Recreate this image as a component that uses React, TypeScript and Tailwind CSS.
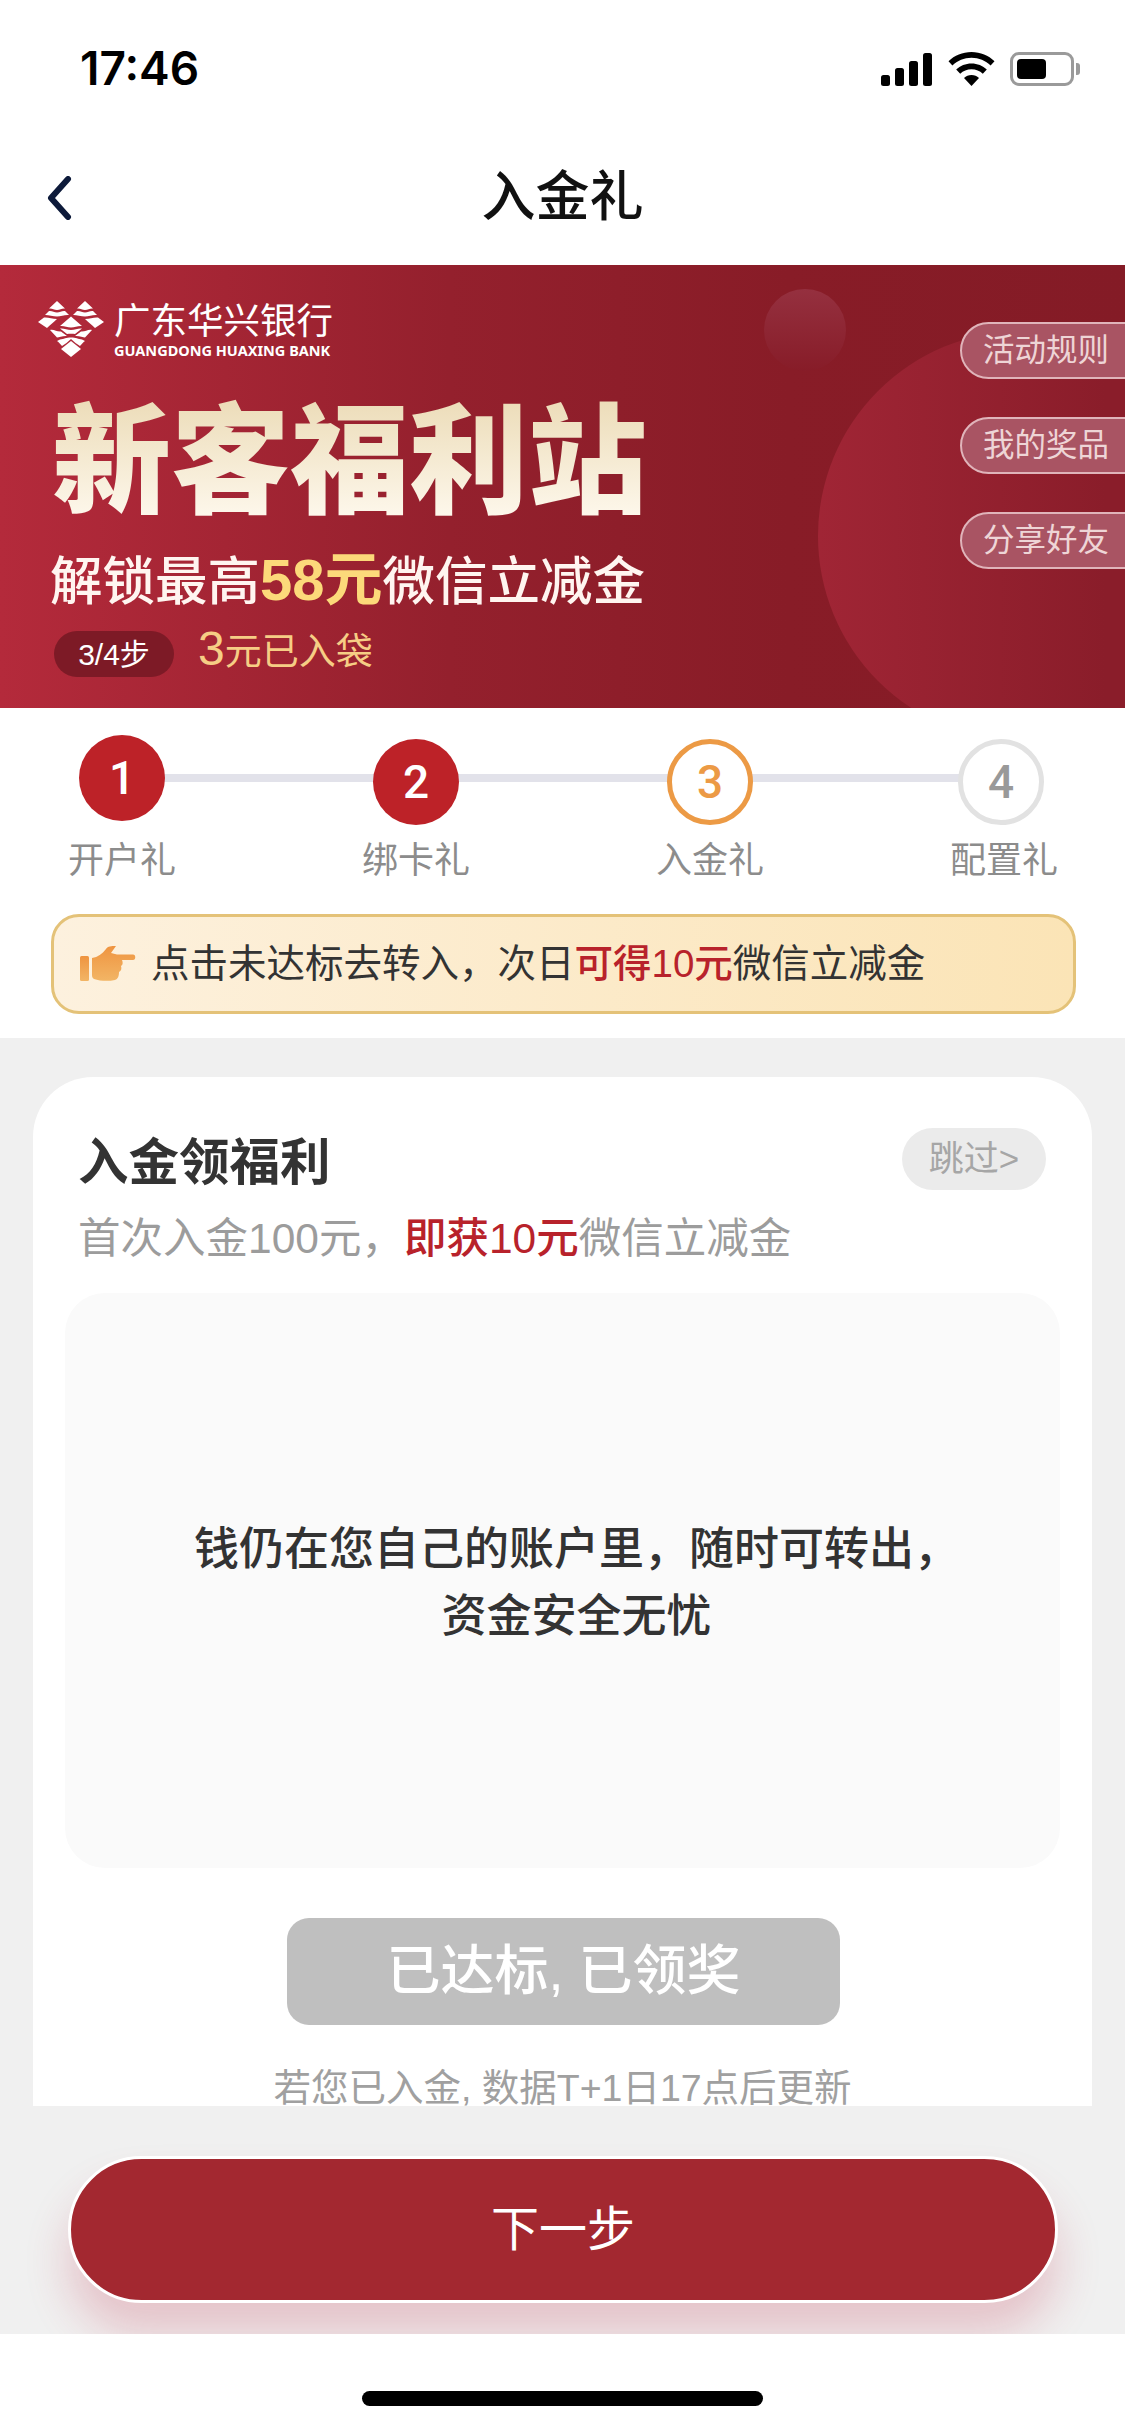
const Signal = () => (
  <svg width="52" height="33" viewBox="0 0 52 33" fill="#000">
    <rect x="0" y="22" width="9" height="11" rx="2.5" />
    <rect x="14" y="15" width="9" height="18" rx="2.5" />
    <rect x="28" y="8" width="9" height="25" rx="2.5" />
    <rect x="42" y="0" width="9" height="33" rx="2.5" />
  </svg>
);

const Wifi = () => (
  <svg width="47" height="34" viewBox="0 0 47 34" fill="#000">
    <path d="M23.5 0C14.5 0 6.5 3.5 0.5 9.2L4.4 13.4C9.4 8.7 16.1 5.8 23.5 5.8S37.6 8.7 42.6 13.4L46.5 9.2C40.5 3.5 32.5 0 23.5 0Z" />
    <path d="M23.5 11.5C17.6 11.5 12.2 13.8 8.2 17.6L12.2 21.8C15.2 19 19.1 17.3 23.5 17.3S31.8 19 34.8 21.8L38.8 17.6C34.8 13.8 29.4 11.5 23.5 11.5Z" />
    <path d="M23.5 23C20.6 23 18 24.1 16 26L23.5 34L31 26C29 24.1 26.4 23 23.5 23Z" />
  </svg>
);

const Battery = () => (
  <div className="flex items-center">
    <div className="w-[64px] h-[34px] rounded-[9px] border-[3px] border-[#9a9a9a] p-[4px] flex">
      <div className="w-[29px] h-full rounded-[4px] bg-black" />
    </div>
    <div className="w-[4px] h-[12px] ml-[2px] rounded-r-[3px] bg-[#9a9a9a]" />
  </div>
);

const BankLogo = () => (
  <svg width="66" height="56" viewBox="0 0 66 56" fill="#fff">
    <path d="M19 0L27 7.5C24 7 22 9 19 9S14 7 11 7.5Z" />
    <path d="M47 0L55 7.5C52 7 50 9 47 9S42 7 39 7.5Z" />
    <path d="M11 10C14 9.5 16 11.5 19 11.5S24 9.5 27 10L31 14C27 13.5 23 15.5 19 15.5S9 13.5 7 14Z" />
    <path d="M39 10C42 9.5 44 11.5 47 11.5S52 9.5 55 10L59 14C55 13.5 51 15.5 47 15.5S37 13.5 35 14Z" />
    <path d="M0 21L6 16.5C10 16 14 18 19 18C16 21 12 24 9 27Z" />
    <path d="M66 21L60 16.5C56 16 52 18 47 18C50 21 54 24 57 27Z" />
    <path d="M33 15.5L44 25C40 24.5 37 26.5 33 26.5S26 24.5 22 25Z" />
    <path d="M12 29C16 28 19 31 23 30.5L29 35C25 34.5 21 36.5 19 36.5Z" />
    <path d="M54 29C50 28 47 31 43 30.5L37 35C41 34.5 45 36.5 47 36.5Z" />
    <path d="M22 27.5C26 27 29 29 33 29S40 27 44 27.5L37 33C35 32.5 31 32.5 29 33Z" />
    <path d="M33 40L43 48L33 56L23 48Z" />
    <path d="M22 38.5C26 38 28 36.5 33 36.5S40 38 44 38.5L47 40C45 41 44 43 42 45C39 43 36 41 33 38C30 41 27 43 24 45C22 43 21 41 19 40Z" />
  </svg>
);

const Hand = () => (
  <svg width="56" height="36" viewBox="0 0 56 36">
    <defs>
      <linearGradient id="hand" x1="0" y1="0" x2="0" y2="1">
        <stop offset="0" stopColor="#ef9440" />
        <stop offset="1" stopColor="#f2b565" />
      </linearGradient>
    </defs>
    <rect x="0" y="10" width="9" height="25" rx="1.5" fill="url(#hand)" />
    <path d="M12 12C18 11 22 8 26 3C28 0 31 0 36 0L31 7L37 8.5H53C56 8.5 56 14 53 14H42C43 16 43 19 41 20C42 23 41 25 39 26C39 30 38 33 35 34C28 35.5 20 35 14 33C12 32 12 30 12 28Z" fill="url(#hand)" />
  </svg>
);

const Pill = ({ label }: { label: string }) => (
  <div className="w-[175px] h-[57px] rounded-l-[29px] border-2 border-[#e0b4ba] bg-[#a95463] flex items-center pl-[21px] text-[31.5px] text-[#eed5d6] leading-none whitespace-nowrap">
    {label}
  </div>
);

const steps = [
  { n: "1", label: "开户礼", circle: "bg-[#bd2228] text-white" },
  { n: "2", label: "绑卡礼", circle: "bg-[#bd2228] text-white mt-[4px]" },
  { n: "3", label: "入金礼", circle: "bg-white border-[5px] border-[#ec9a45] text-[#ec9a45] mt-[4px]" },
  { n: "4", label: "配置礼", circle: "bg-white border-[5px] border-[#e2e2e2] text-[#999999] mt-[4px] -translate-x-[3px]" },
];

export default function App() {
  return (
    <div className="w-[1125px] h-[2436px] bg-white flex flex-col overflow-hidden [font-family:'Liberation_Sans','Noto_Sans_CJK_SC',sans-serif]">
      <div className="h-[136px] flex items-start justify-between pl-[80px] pr-[45px] pt-[44px]">
        <span className="text-[46px] leading-[48px] font-semibold text-black [font-family:Inter,sans-serif]">17:46</span>
        <div className="flex items-center gap-[15px] mt-[8px]">
          <Signal />
          <Wifi />
          <Battery />
        </div>
      </div>

      <div className="relative h-[129px] flex items-center justify-center pb-[7px]">
        <svg className="absolute left-[46px] top-[40px]" width="26" height="44" viewBox="0 0 26 44" fill="none">
          <path d="M22 3L5 22L22 41" stroke="#0d1a3a" strokeWidth="6" strokeLinecap="round" strokeLinejoin="round" />
        </svg>
        <span className="text-[54px] leading-[64px] font-medium text-[#111111]">入金礼</span>
      </div>

      <div className="relative h-[443px] overflow-hidden bg-[linear-gradient(90deg,#b42a3b_0%,#94202d_40%,#881c27_70%,#841b26_100%)] pl-[38px] pt-[34px]">
        <div className="absolute left-[818px] top-[66px] w-[410px] h-[410px] rounded-full bg-[linear-gradient(90deg,#a02535,#8a1d2a_70%)]" />
        <div className="absolute left-[764px] top-[24px] w-[82px] h-[82px] rounded-full bg-[linear-gradient(180deg,#95303f,#871c28)]" />

        <div className="relative flex items-center gap-[10px]">
          <BankLogo />
          <div className="flex flex-col text-white mt-[3px]">
            <span className="text-[36.5px] leading-[40px] whitespace-nowrap">广东华兴银行</span>
            <span className="text-[14.5px] leading-[16px] font-bold whitespace-nowrap [font-family:'Noto_Sans',sans-serif]">GUANGDONG HUAXING BANK</span>
          </div>
        </div>

        <div className="relative mt-[40px] ml-[14px] w-fit text-[119px] leading-[130px] font-black whitespace-nowrap text-transparent bg-clip-text bg-[linear-gradient(180deg,#ecdcb8,#fffaf0)]">
          新客福利站
        </div>

        <div className="relative mt-[20px] ml-[12px] text-[52.5px] leading-[64px] font-medium text-[#fff5f0] whitespace-nowrap">
          解锁最高<span className="font-bold text-[#fcd97a] text-[58px]">58元</span>微信立减金
        </div>

        <div className="relative mt-[10px] ml-[16px] flex items-center">
          <div className="w-[120px] h-[46px] rounded-[23px] bg-[#7d1a26] flex items-center justify-center text-[30px] text-white whitespace-nowrap mt-[6px]">
            3/4步
          </div>
          <div className="ml-[24px] text-[37px] leading-[50px] text-[#f6cd85] whitespace-nowrap">
            <span className="text-[48px]">3</span>元已入袋
          </div>
        </div>

        <div className="absolute left-[960px] top-[57px] flex flex-col gap-[38px]">
          <Pill label="活动规则" />
          <Pill label="我的奖品" />
          <Pill label="分享好友" />
        </div>
      </div>

      <div className="h-[330px] bg-white pl-[51px] pr-[49px] flex flex-col">
        <div className="relative h-[206px] pt-[27px] flex justify-between pl-[16px] pr-[17px]">
          <div className="absolute left-[90px] right-[70px] top-[66px] h-[8px] bg-[#e2e2ea]" />
          {steps.map((s) => (
            <div key={s.n} className="relative w-[110px] flex flex-col items-center">
              <div className="h-[88px]">
                <div className={`w-[86px] h-[86px] rounded-full flex items-center justify-center text-[46px] font-medium [font-family:'Roboto',sans-serif] ${s.circle}`}>
                  {s.n}
                </div>
              </div>
              <span className="mt-[16px] text-[36px] leading-[44px] text-[#8c8c8c] whitespace-nowrap">{s.label}</span>
            </div>
          ))}
        </div>
        <div className="h-[100px] rounded-[28px] border-[3px] border-[#e4c278] bg-[linear-gradient(90deg,#fdf1de,#fbe4b6)] flex items-center pl-[26px] gap-[15px] text-[38.5px] text-[#333333] whitespace-nowrap">
          <Hand />
          <span>
            点击未达标去转入，次日<span className="text-[#b8222b] font-medium">可得10元</span>微信立减金
          </span>
        </div>
      </div>

      <div className="relative h-[1296px] bg-[#f0f0f0] overflow-hidden flex flex-col pl-[33px] pr-[33px] pt-[39px]">
        <div className="h-[1029px] shrink-0 bg-white rounded-t-[60px] overflow-hidden flex flex-col px-[32px]">
          <div className="flex items-start justify-between pl-[13px] pr-[14px] pt-[51px]">
            <span className="text-[50.5px] leading-[68px] font-bold text-[#333333] mt-[1px]">入金领福利</span>
            <div className="w-[144px] h-[62px] rounded-[31px] bg-[#ebebeb] flex items-center justify-center text-[35px] text-[#a6a6a6] whitespace-nowrap">
              跳过&gt;
            </div>
          </div>
          <div className="pl-[13px] mt-[12px] text-[42.5px] leading-[60px] text-[#9c9c9c] whitespace-nowrap">
            首次入金100元，<span className="text-[#b8222b] font-medium">即获10元</span>微信立减金
          </div>
          <div className="mt-[24px] h-[575px] shrink-0 rounded-[40px] bg-[#fafafa] flex flex-col items-center justify-center pl-[28px] pt-[5px] text-[45px] leading-[67px] font-medium text-[#333333]">
            <span>钱仍在您自己的账户里，随时可转出，</span>
            <span>资金安全无忧</span>
          </div>
          <div className="mt-[50px] ml-[222px] w-[553px] h-[107px] shrink-0 rounded-[22px] bg-[#bfbfbf] flex items-center justify-center text-[54px] font-medium text-white whitespace-nowrap">
            已达标, 已领奖
          </div>
          <div className="mt-[37px] text-center text-[37.5px] leading-[52px] text-[#a0a0a0] whitespace-nowrap">
            若您已入金, 数据T+1日17点后更新
          </div>
        </div>
        <div className="mt-[50px] ml-[35px] w-[990px] h-[147px] shrink-0 rounded-[74px] bg-[#a32830] border-[3px] border-white shadow-[0_32px_44px_rgba(190,40,70,0.22)] flex items-center justify-center text-[48px] text-white">
          下一步
        </div>
      </div>

      <div className="flex-1 bg-white flex justify-center pt-[57px]">
        <div className="w-[401px] h-[15px] rounded-full bg-black" />
      </div>
    </div>
  );
}
